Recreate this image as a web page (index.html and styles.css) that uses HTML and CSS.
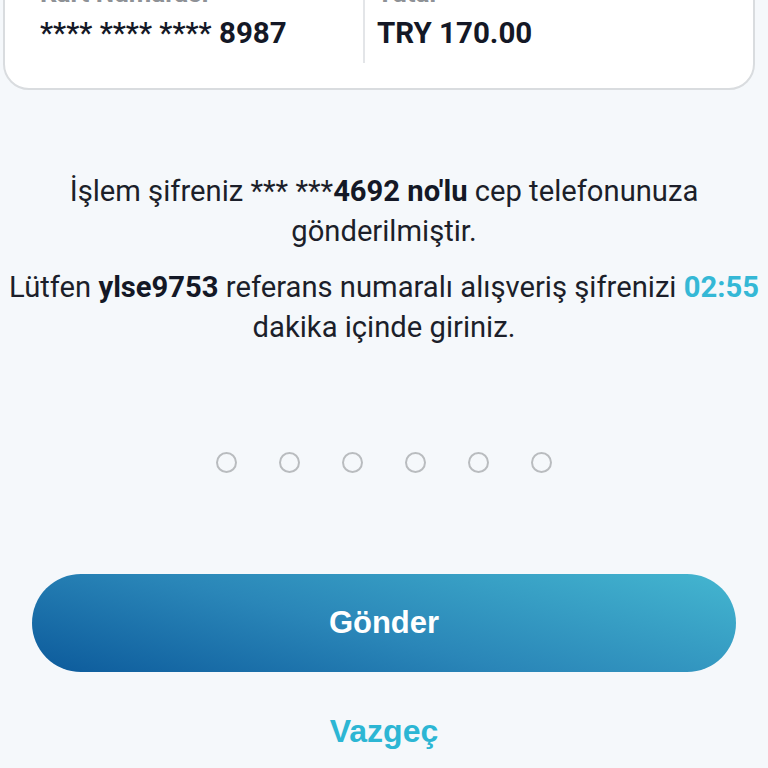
FILE: index.html
```html
<!DOCTYPE html>
<html lang="tr">
<head>
<meta charset="utf-8">
<link rel="stylesheet" href="styles.css">
</head>
<body>
<main class="page">
  <section class="card">
    <div class="col col-left">
      <div class="label">Kart Numarası</div>
      <div class="value"><span class="stars">**** **** ****</span> 8987</div>
    </div>
    <div class="divider"></div>
    <div class="col col-right">
      <div class="label">Tutar</div>
      <div class="value">TRY 170.00</div>
    </div>
  </section>

  <section class="message">
    <p>İşlem şifreniz *** ***<b>4692 no'lu</b> cep telefonunuza gönderilmiştir.</p>
    <p class="p2">Lütfen <b>ylse9753</b> referans numaralı alışveriş şifrenizi <span class="timer">02:55</span> dakika içinde giriniz.</p>
  </section>

  <div class="pins">
    <span class="pin"></span><span class="pin"></span><span class="pin"></span><span class="pin"></span><span class="pin"></span><span class="pin"></span>
  </div>

  <button class="submit">Gönder</button>
  <div class="cancel">Vazgeç</div>
</main>
</body>
</html>
```
FILE: styles.css
```css
html, body {
  margin: 0;
  padding: 0;
  background: #f5f8fb;
  height: 768px;
  overflow: hidden;
}
.page {
  display: flex;
  flex-direction: column;
  font-family: Roboto, "Noto Sans", sans-serif;
  color: #1c1f2a;
}
.card {
  margin: -67px 0 0 3px;
  width: 752px;
  height: 157px;
  background: #ffffff;
  border: 2px solid #d9dcdf;
  border-radius: 26px;
  display: flex;
  box-sizing: border-box;
  flex-shrink: 0;
}
.col {
  display: flex;
  flex-direction: column;
  justify-content: flex-start;
  padding-top: 44px;
}
.col-left {
  padding-left: 35px;
  width: 358px;
  box-sizing: border-box;
}
.col-right {
  padding-left: 12px;
}
.divider {
  width: 2px;
  background: #e3e5e8;
  margin-top: 20px;
  height: 108px;
}
.label {
  font-size: 26px;
  font-weight: 700;
  color: #8e9196;
  line-height: 28px;
}
.value {
  font-size: 29.5px;
  font-weight: 700;
  color: #141826;
  line-height: 36px;
  margin-top: 8px;
  white-space: nowrap;
}
.stars {
  font-weight: 500;
}
.message {
  margin-top: 81px;
  text-align: center;
  font-size: 29.2px;
  line-height: 40px;
  color: #1c1f2a;
}
.message p {
  margin: 0;
  padding: 0 56px;
}
.message .p2 {
  margin-top: 16px;
  padding: 0;
}
.message b {
  font-weight: 700;
  color: #141826;
}
.timer {
  color: #35b8d6;
  font-weight: 700;
}
.pins {
  margin-top: 105px;
  display: flex;
  justify-content: center;
  gap: 42px;
}
.pin {
  width: 17px;
  height: 17px;
  border: 2.5px solid #b9bcbf;
  border-radius: 50%;
}
.submit {
  margin: 101px 32px 0 32px;
  height: 98px;
  flex-shrink: 0;
  border: none;
  border-radius: 49px;
  background: linear-gradient(15deg, #0c5a9b 0%, #2a86b8 45%, #44b6d0 100%);
  color: #ffffff;
  font-family: "Liberation Sans", Arial, sans-serif;
  font-size: 31px;
  font-weight: 700;
  padding: 0;
}
.cancel {
  margin-top: 41px;
  text-align: center;
  font-family: "Liberation Sans", Arial, sans-serif;
  font-size: 32px;
  font-weight: 700;
  color: #2cb6d4;
}
```
